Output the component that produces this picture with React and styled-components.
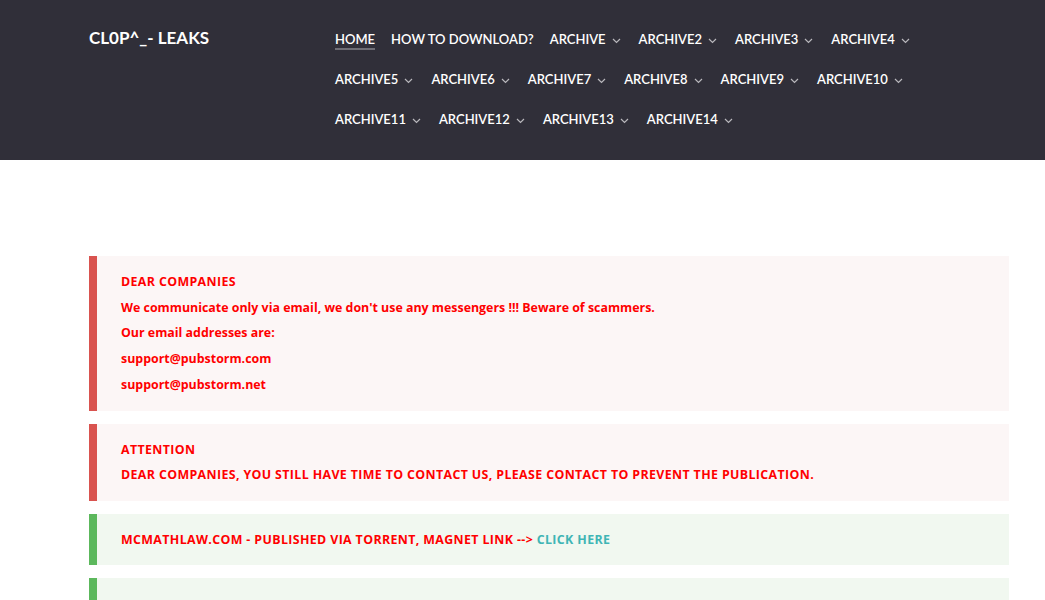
import React from "react";
import styled, { createGlobalStyle } from "styled-components";

const Global = createGlobalStyle`
  html, body { margin: 0; padding: 0; background: #ffffff; }
  body { font-family: Lato, "Liberation Sans", sans-serif; }
  * { box-sizing: border-box; }
`;

const Header = styled.header`
  background: #302f39;
  height: 160px;
`;

const HeaderInner = styled.div`
  display: flex;
  padding-left: 89px;
  width: 1009px;
`;

const Logo = styled.div`
  width: 246px;
  flex: none;
  color: #ffffff;
  font-weight: 700;
  font-size: 17px;
  line-height: 20px;
  padding-top: 28px;
`;

const Nav = styled.nav`
  display: flex;
  flex-direction: column;
  width: 620px;
  padding-top: 19px;
`;

const NavRow = styled.div`
  display: flex;
  width: 100%;
`;

const NavItem = styled.a`
  position: relative;
  display: flex;
  align-items: center;
  height: 40px;
  margin-right: ${(p) => (p.$caret ? "18px" : "16px")};
  color: #ffffff;
  font-size: 13px;
  font-weight: 600;
  text-decoration: none;
  white-space: nowrap;
  ${(p) =>
    p.$active &&
    `&::after{content:"";position:absolute;left:0;right:0;bottom:9px;height:2px;background:#6f6e76;}`}
`;

const Caret = styled.svg`
  width: 9px;
  height: 6px;
  margin-left: 6px;
  margin-top: 4px;
`;

const Chevron = () => (
  <Caret viewBox="0 0 9 6">
    <polyline points="1,1 4.5,4.5 8,1" fill="none" stroke="#b9b8bd" strokeWidth="1.2" />
  </Caret>
);

const Main = styled.main`
  padding: 96px 0 0 89px;
  width: 1009px;
  display: flex;
  flex-direction: column;
  gap: 13px;
`;

const Alert = styled.div`
  border-left: 8px solid ${(p) => (p.$kind === "success" ? "#5cb85c" : "#d9534f")};
  background: ${(p) => (p.$kind === "success" ? "#f1f8f0" : "#fcf6f6")};
  padding: ${(p) => p.$pad || "14px 24px"};
  min-height: ${(p) => p.$minH || "0"};
  font-family: "Open Sans", "Liberation Sans", sans-serif;
  font-weight: 700;
  font-size: 12.4px;
  color: #ff0000;
`;

const Line = styled.div`
  line-height: 25.7px;
  letter-spacing: ${(p) => (p.$upper ? "0.37px" : "0")};
`;

const Link = styled.a`
  color: #3fb5b5;
  text-decoration: none;
`;

const rows = [
  ["HOME", "HOW TO DOWNLOAD?", "ARCHIVE", "ARCHIVE2", "ARCHIVE3", "ARCHIVE4"],
  ["ARCHIVE5", "ARCHIVE6", "ARCHIVE7", "ARCHIVE8", "ARCHIVE9", "ARCHIVE10"],
  ["ARCHIVE11", "ARCHIVE12", "ARCHIVE13", "ARCHIVE14"],
];

export default function App() {
  return (
    <>
      <Global />
      <Header>
        <HeaderInner>
          <Logo>CL0P^_- LEAKS</Logo>
          <Nav>
            {rows.map((r, i) => (
              <NavRow key={i}>
                {r.map((t) => {
                  const caret = t.startsWith("ARCHIVE");
                  return (
                    <NavItem key={t} href="#" $active={t === "HOME"} $caret={caret}>
                      {t}
                      {caret && <Chevron />}
                    </NavItem>
                  );
                })}
              </NavRow>
            ))}
          </Nav>
        </HeaderInner>
      </Header>
      <Main>
        <Alert $pad="13px 24px 13px 24px">
          <Line $upper>DEAR COMPANIES</Line>
          <Line>We communicate only via email, we don't use any messengers !!! Beware of scammers.</Line>
          <Line>Our email addresses are:</Line>
          <Line>support@pubstorm.com</Line>
          <Line>support@pubstorm.net</Line>
        </Alert>
        <Alert $pad="13px 24px 13px 24px">
          <Line $upper>ATTENTION</Line>
          <Line $upper>DEAR COMPANIES, YOU STILL HAVE TIME TO CONTACT US, PLEASE CONTACT TO PREVENT THE PUBLICATION.</Line>
        </Alert>
        <Alert $kind="success" $pad="13px 24px 12px 24px">
          <Line $upper>
            MCMATHLAW.COM - PUBLISHED VIA TORRENT, MAGNET LINK --&gt; <Link href="#">CLICK HERE</Link>
          </Line>
        </Alert>
        <Alert $kind="success" $minH="60px" />
      </Main>
    </>
  );
}
